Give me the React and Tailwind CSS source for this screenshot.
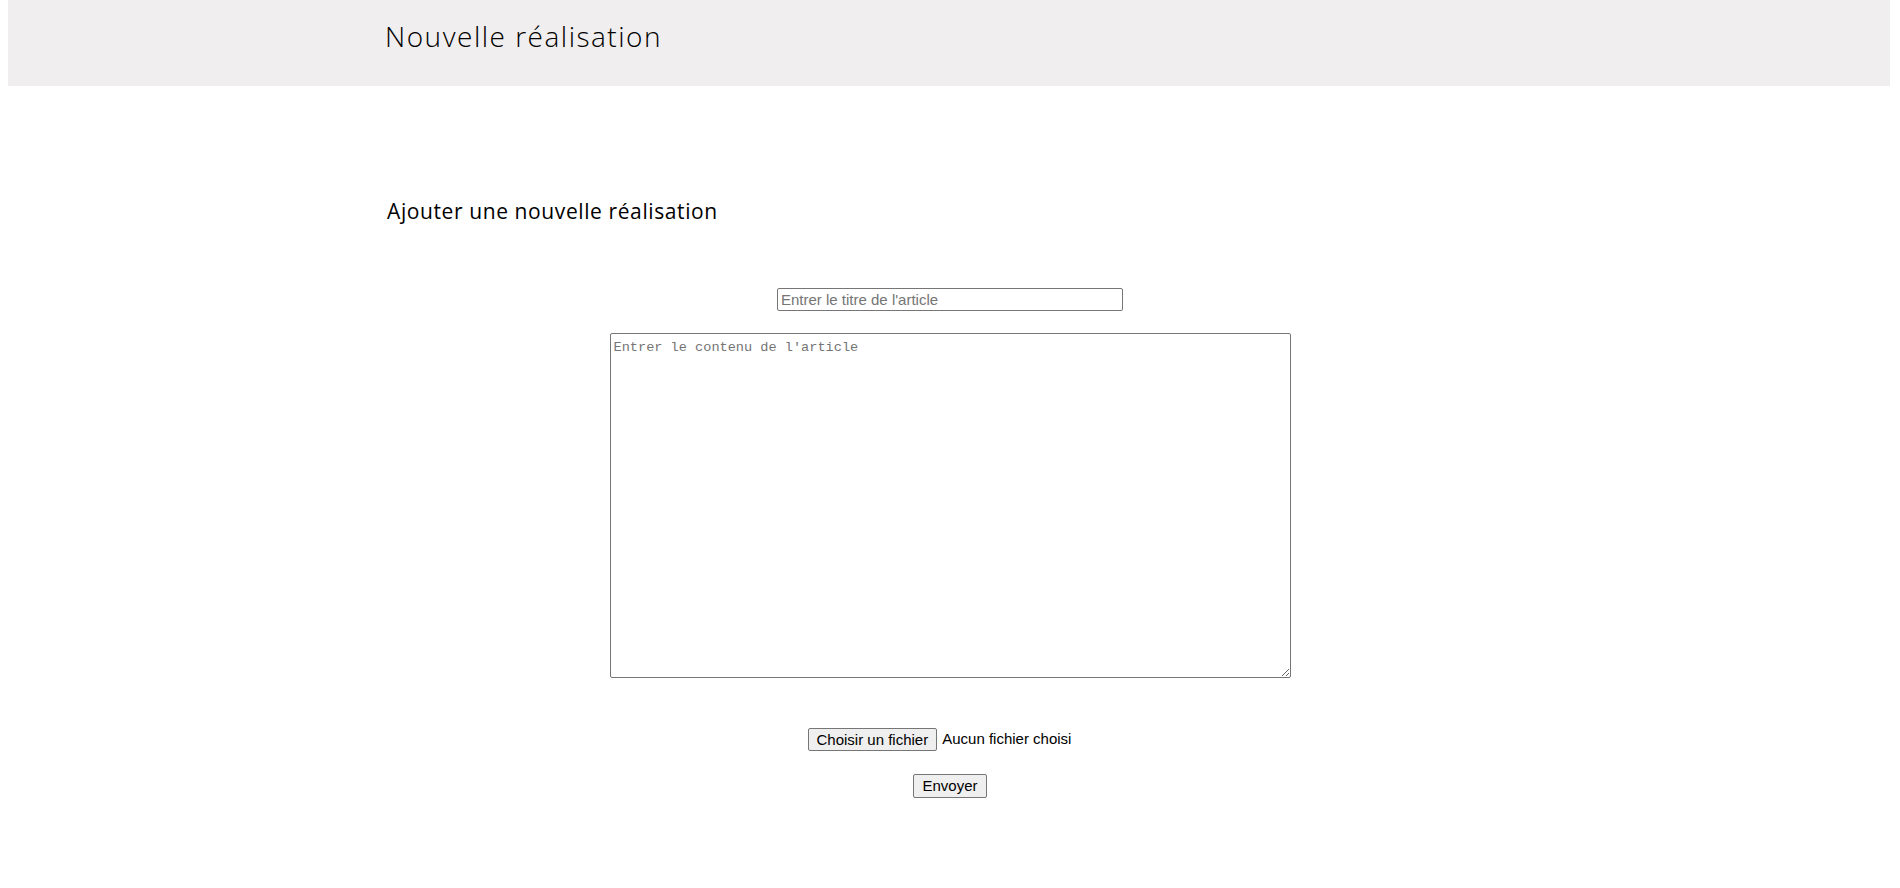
import React from 'react';

const App = () => {
    return (
        <div className="min-h-screen bg-white" style={{ fontFamily: '"Liberation Sans", Arial, sans-serif' }}>
            {/* Top bar */}
            <header className="ml-[8px] w-[1882px] h-[86px] bg-[#f0eeee]">
                <div className="w-[1126px] mx-auto pt-[18px] -translate-x-[1px]">
                    <h1 className="font-['Open_Sans',sans-serif] font-light text-[28px] leading-[36px] text-black tracking-[1.5px]">
                        Nouvelle réalisation
                    </h1>
                </div>
            </header>

            <main className="w-[1126px] mx-auto">
                <h2 className="mt-[113px] font-['Open_Sans',sans-serif] font-medium text-[21px] leading-[24px] text-black tracking-[0.6px]">
                    Ajouter une nouvelle réalisation
                </h2>

                {/* Form */}
                <form className="flex flex-col items-center" onSubmit={(e) => e.preventDefault()}>
                    <input
                        type="text"
                        placeholder="Entrer le titre de l'article"
                        className="mt-[65px] w-[346px] h-[23px] px-[3px] border border-[#767676] rounded-[2px] text-[15px] font-['Liberation_Sans',Arial,sans-serif] placeholder:text-[#757575] outline-none"
                    />

                    <textarea
                        placeholder="Entrer le contenu de l'article"
                        className="mt-[22px] w-[681px] h-[345px] px-[3px] pt-[6px] pb-[2px] border border-[#767676] rounded-[2px] text-[13.6px] leading-[16px] font-['Liberation_Mono',monospace] placeholder:text-[#757575] outline-none"
                    />

                    <div className="mt-[50px] w-[285px] flex items-center gap-[5px] text-[15px] text-black">
                        <button
                            type="button"
                            className="h-[23px] px-[8px] bg-[#efefef] border border-[#767676] rounded-[2px] text-[15px] text-black"
                        >
                            Choisir un fichier
                        </button>
                        <span>Aucun fichier choisi</span>
                    </div>

                    <button
                        type="submit"
                        className="mt-[23px] h-[24px] px-[8px] bg-[#efefef] border border-[#767676] rounded-[2px] text-[15px] text-black"
                    >
                        Envoyer
                    </button>
                </form>
            </main>
        </div>
    );
};

export default App;
